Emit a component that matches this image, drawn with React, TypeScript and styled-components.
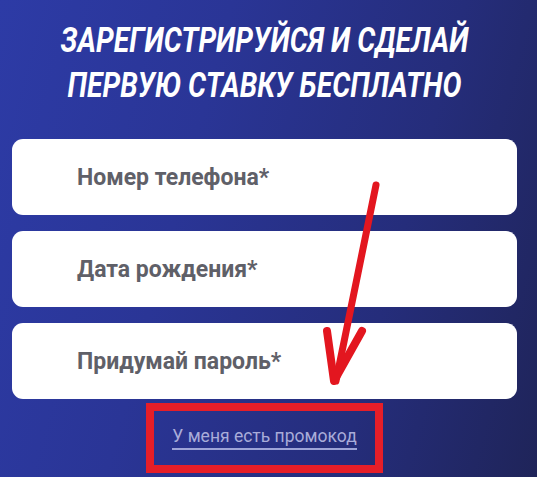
import React from 'react';
import styled, { createGlobalStyle } from 'styled-components';

const GlobalStyle = createGlobalStyle`
    html, body {
        margin: 0;
        padding: 0;
        background: #1f2459;
    }
    * {
        box-sizing: border-box;
    }
`;

const Page = styled.div`
    position: relative;
    width: 537px;
    height: 477px;
    overflow: hidden;
    display: flex;
    flex-direction: column;
    align-items: stretch;
    padding: 18px 20px 0 12px;
    background: linear-gradient(105deg, #2d3ba6 0%, #2a3596 35%, #252d7b 70%, #1f2459 100%);
    font-family: Roboto, 'Liberation Sans', sans-serif;
`;

const Title = styled.h1`
    margin: 0 0 31px;
    text-align: center;
    white-space: nowrap;
    color: #ffffff;
    font-family: Roboto, 'Liberation Sans', sans-serif;
    font-style: italic;
    font-weight: 700;
    font-size: 35px;
    line-height: 45px;
    text-transform: uppercase;
    /* the original face is a condensed display font */
    transform: scaleX(0.81);
    transform-origin: 50% 50%;
`;

const Form = styled.div`
    display: flex;
    flex-direction: column;
    align-items: center;
    gap: 16px;
`;

const Field = styled.div`
    width: 100%;
    height: 76px;
    display: flex;
    align-items: center;
    padding-left: 65px;
    border-radius: 11px;
    background: #ffffff;
    color: #5f6068;
    font-size: 23px;
    font-weight: 700;
`;

const PromoFrame = styled.div`
    margin-top: -12px;
    width: 237px;
    height: 70px;
    display: flex;
    align-items: center;
    justify-content: center;
    border: 8px solid #e61e28;
`;

const PromoLink = styled.a`
    color: #a9acd9;
    font-size: 17.5px;
    font-weight: 400;
    text-decoration: none;
    padding-bottom: 2px;
    border-bottom: 2px solid #9ea4d8;
    cursor: pointer;
`;

const ArrowLayer = styled.svg`
    position: absolute;
    left: 0;
    top: 0;
    pointer-events: none;
`;

const fields = ['Номер телефона*', 'Дата рождения*', 'Придумай пароль*'];

export default function App() {
    return (
        <>
            <GlobalStyle />
            <Page>
                <Title>
                    Зарегистрируйся и сделай
                    <br />
                    первую ставку бесплатно
                </Title>
                <Form>
                    {fields.map((f) => (
                        <Field key={f}>{f}</Field>
                    ))}
                    <PromoFrame>
                        <PromoLink>У меня есть промокод</PromoLink>
                    </PromoFrame>
                </Form>
                <ArrowLayer width="537" height="477" viewBox="0 0 537 477">
                    <path d="M376 185 L336 381" stroke="#e3161f" strokeWidth="7" strokeLinecap="round" fill="none" />
                    <path
                        d="M327 331 L334 381 L362 331"
                        stroke="#e3161f"
                        strokeWidth="8"
                        strokeLinecap="round"
                        strokeLinejoin="round"
                        fill="none"
                    />
                </ArrowLayer>
            </Page>
        </>
    );
}
